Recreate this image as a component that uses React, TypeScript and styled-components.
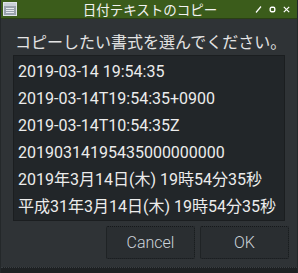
import React from 'react';
import styled, { createGlobalStyle } from 'styled-components';

const formats = [
  '2019-03-14 19:54:35',
  '2019-03-14T19:54:35+0900',
  '2019-03-14T10:54:35Z',
  '20190314195435000000000',
  '2019年3月14日(木) 19時54分35秒',
  '平成31年3月14日(木) 19時54分35秒',
];

const App: React.FC = () => {
  return (
    <>
      <GlobalStyle />
      <Window>
        <TitleBar>
          <AppIcon width="14" height="14" viewBox="0 0 14 14">
            <rect x="0.5" y="0.5" width="13" height="13" fill="#9aa3ad" stroke="#dfe4ea" />
            <rect x="1" y="1" width="12" height="3" fill="#c9d0d8" />
            <line x1="3" y1="6.5" x2="11" y2="6.5" stroke="#e6eaee" />
            <line x1="3" y1="8.5" x2="11" y2="8.5" stroke="#e6eaee" />
            <line x1="3" y1="10.5" x2="11" y2="10.5" stroke="#e6eaee" />
          </AppIcon>
          <Title>日付テキストのコピー</Title>
          <Controls>
            <svg width="7" height="7" viewBox="0 0 7 7">
              <line x1="1" y1="6.5" x2="6" y2="0.5" stroke="#fff" strokeWidth="1.2" />
            </svg>
            <svg width="7" height="7" viewBox="0 0 7 7">
              <rect x="1.2" y="1.2" width="4.6" height="4.6" rx="1.5" fill="none" stroke="#fff" strokeWidth="1.4" />
            </svg>
            <svg width="7" height="7" viewBox="0 0 7 7">
              <path d="M0.8 0.8 L6.2 6.2 M6.2 0.8 L0.8 6.2" stroke="#fff" strokeWidth="1.2" />
            </svg>
          </Controls>
        </TitleBar>

        <Body>
          <Heading>コピーしたい書式を選んでください。</Heading>
          <FormatList>
            {formats.map((f) => (
              <FormatRow key={f}>{f}</FormatRow>
            ))}
          </FormatList>
          <ButtonRow>
            <Button>Cancel</Button>
            <Button>OK</Button>
          </ButtonRow>
        </Body>
        <BottomEdge />
      </Window>
    </>
  );
};

export default App;

const GlobalStyle = createGlobalStyle`
  body {
    margin: 0;
    background: #2f3336;
    font-family: Roboto, "Noto Sans CJK JP", sans-serif;
  }
`;

const Window = styled.div`
  width: 298px;
  height: 273px;
  display: flex;
  flex-direction: column;
  background: #2f3336;
  box-sizing: border-box;
  border-left: 1px solid #24282a;
  border-right: 1px solid #24282a;
`;

const TitleBar = styled.div`
  height: 18px;
  flex-shrink: 0;
  background: #3b5c1b;
  border-bottom: 1px solid #2a3f14;
  display: flex;
  align-items: center;
  padding: 0 7px 0 2px;
`;

const AppIcon = styled.svg`
  flex-shrink: 0;
`;

const Title = styled.div`
  flex: 1;
  text-align: center;
  color: #f2f2f2;
  font-family: "Noto Sans CJK JP", sans-serif;
  font-size: 13.5px;
  line-height: 18px;
  padding-left: 28px;
`;

const Controls = styled.div`
  display: flex;
  gap: 7px;
  align-items: center;
`;

const Body = styled.div`
  flex: 1;
  display: flex;
  flex-direction: column;
  padding: 11px 12px 0 12px;
`;

const Heading = styled.div`
  color: #e4e4e4;
  font-family: "Noto Sans CJK JP", sans-serif;
  font-size: 16px;
  line-height: 22px;
  margin: 0 0 3px 2px;
  white-space: nowrap;
`;

const FormatList = styled.div`
  height: 166px;
  box-sizing: border-box;
  background: #222629;
  border: 1px solid #1b1e20;
  padding: 2px 4px;
  display: flex;
  flex-direction: column;
`;

const FormatRow = styled.div`
  height: 27px;
  line-height: 27px;
  color: #ececec;
  font-size: 16px;
  white-space: nowrap;
`;

const ButtonRow = styled.div`
  display: flex;
  justify-content: flex-end;
  gap: 5px;
  margin: 5px -4px 0 0;
`;

const Button = styled.div`
  width: 89px;
  height: 33px;
  box-sizing: border-box;
  background: #2a2e31;
  border: 1px dotted #15181a;
  border-radius: 2px;
  color: #ccd3da;
  font-size: 16px;
  font-weight: 300;
  display: flex;
  align-items: center;
  justify-content: center;
`;

const BottomEdge = styled.div`
  height: 5px;
  flex-shrink: 0;
  margin-top: auto;
  background: #1e2123;
  border-top: 1px dotted #3a3f43;
`;
